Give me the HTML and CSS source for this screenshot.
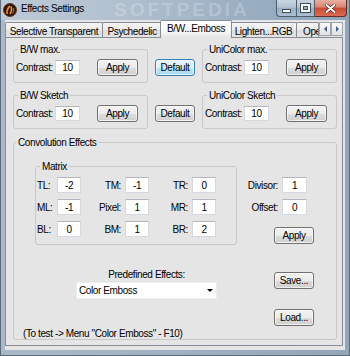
FILE: index.html
```html
<!DOCTYPE html>
<html>
<head>
<meta charset="utf-8">
<title>Effects Settings</title>
<link rel="stylesheet" href="styles.css">
</head>
<body>
<div class="window">
  <div class="titlebar">
    <svg class="app-icon" width="14" height="14" viewBox="0 0 14 14">
      <circle cx="7" cy="7" r="6.5" fill="#2a140a" stroke="#6b3a18" stroke-width="1"/>
      <path d="M4 11 Q3.5 6 7 3" fill="none" stroke="#e8842a" stroke-width="1.8"/>
      <path d="M7 11 Q9.5 7 8 3.5" fill="none" stroke="#f0a040" stroke-width="1.5"/>
      <path d="M9.5 10.5 Q11.5 8 10.5 5" fill="none" stroke="#c85a18" stroke-width="1.2"/>
    </svg>
    <span class="title">Effects Settings</span>
    <span class="wm-title">SOFTPEDIA</span>
    <div class="caption">
      <div class="cbtn cmin"><span class="g-min"></span></div>
      <div class="cbtn cmax"><span class="g-max"></span></div>
      <div class="cbtn cclose">
        <svg width="11" height="9" viewBox="0 0 11 9">
          <path d="M1.5 1 L9.5 8 M9.5 1 L1.5 8" stroke="#5a1c12" stroke-width="3.4" stroke-linecap="round"/>
          <path d="M1.5 1 L9.5 8 M9.5 1 L1.5 8" stroke="#ffffff" stroke-width="2" stroke-linecap="round"/>
        </svg>
      </div>
    </div>
  </div>
  <div class="frame">
    <div class="client">
      <div class="tabstrip">
        <div class="tab t1">Selective Transparent</div>
        <div class="tab t2">Psychedelic</div>
        <div class="tab t3 sel">B/W...Emboss</div>
        <div class="tab t4">Lighten...RGB</div>
        <div class="tab t5">Ope</div>
        <div class="arr"><span class="tri-l"></span></div>
        <div class="arr"><span class="tri-r"></span></div>
      </div>
      <div class="panel">
        <div class="row">
          <fieldset class="group g-small">
            <legend>B/W max.</legend>
            <div class="crow"><span class="lbl">Contrast:</span><input class="tb" value="10" readonly><button class="btn">Apply</button></div>
          </fieldset>
          <button class="btn btn-def focus">Default</button>
          <fieldset class="group g-small">
            <legend>UniColor max.</legend>
            <div class="crow"><span class="lbl">Contrast:</span><input class="tb" value="10" readonly><button class="btn">Apply</button></div>
          </fieldset>
        </div>

        <div class="row row2">
          <fieldset class="group g-small">
            <legend>B/W Sketch</legend>
            <div class="crow"><span class="lbl">Contrast:</span><input class="tb" value="10" readonly><button class="btn">Apply</button></div>
          </fieldset>
          <button class="btn btn-def">Default</button>
          <fieldset class="group g-small">
            <legend>UniColor Sketch</legend>
            <div class="crow"><span class="lbl">Contrast:</span><input class="tb" value="10" readonly><button class="btn">Apply</button></div>
          </fieldset>
        </div>

        <fieldset class="group conv">
          <legend>Convolution Effects</legend>
          <div class="conv-top">
            <fieldset class="group matrix">
              <legend>Matrix</legend>
              <div class="mgrid">
                <span>TL:</span><input class="tb" value="-2" readonly>
                <span class="r">TM:</span><input class="tb" value="-1" readonly>
                <span class="r">TR:</span><input class="tb" value="0" readonly>
                <span>ML:</span><input class="tb" value="-1" readonly>
                <span class="r">Pixel:</span><input class="tb" value="1" readonly>
                <span class="r">MR:</span><input class="tb" value="1" readonly>
                <span>BL:</span><input class="tb" value="0" readonly>
                <span class="r">BM:</span><input class="tb" value="1" readonly>
                <span class="r">BR:</span><input class="tb" value="2" readonly>
              </div>
            </fieldset>
            <div class="side">
              <div class="sgrid">
                <span class="r">Divisor:</span><input class="tb" value="1" readonly>
                <span class="r">Offset:</span><input class="tb" value="0" readonly>
              </div>
              <button class="btn">Apply</button>
            </div>
          </div>
          <div class="conv-bottom">
            <div class="pre">
              <span class="pre-label">Predefined Effects:</span>
              <div class="select"><span>Color Emboss</span><span class="caret"></span></div>
            </div>
            <div class="files">
              <button class="btn save">Save...</button>
              <button class="btn load">Load...</button>
            </div>
          </div>
          <div class="note">(To test -&gt; Menu "Color Emboss" - F10)</div>
        </fieldset>
      </div>
    </div>
  </div>
</div>
</body>
</html>
```
FILE: styles.css
```css
* { box-sizing: border-box; }
html, body { margin: 0; padding: 0; }
body {
  width: 350px;
  height: 356px;
  overflow: hidden;
  background: #9aadc0;
  font-family: "Liberation Sans", Arial, sans-serif;
  font-size: 10px;
  letter-spacing: -0.4px;
  color: #000;
}
.window {
  width: 350px;
  height: 356px;
  display: flex;
  flex-direction: column;
  background: linear-gradient(to right, #a9b9ca, #9fb1c4 50%, #91a6bb);
}

/* title bar */
.titlebar {
  position: relative;
  height: 20px;
  flex: none;
  display: flex;
  align-items: flex-start;
  background: linear-gradient(to right, #bdcad7 0%, #b1c0cf 35%, #9aaec2 70%, #8fa4ba 100%);
  box-shadow: inset 1px 0 #5e6b78, inset -1px 0 #5e6b78;
}
.app-icon { margin: 3px 0 0 3px; flex: none; }
.title { margin: 3px 0 0 4px; line-height: 12px; white-space: nowrap; }
.wm-title {
  position: absolute;
  left: 114px;
  top: 0;
  font-size: 19px;
  line-height: 20px;
  font-weight: bold;
  letter-spacing: 3px;
  color: rgba(255, 255, 255, 0.22);
  white-space: nowrap;
}
.caption { margin-left: auto; margin-right: 3px; display: flex; position: relative; }
.cbtn {
  height: 17px;
  border: 1px solid #4e5d6c;
  border-top: 0;
  display: flex;
  align-items: center;
  justify-content: center;
  background: linear-gradient(#c9d5e1, #b4c4d4 45%, #9aaec3 50%, #abbfd2);
}
.cmin { width: 20px; border-radius: 0 0 0 4px; border-right: 0; }
.cmax { width: 19px; }
.cclose {
  width: 32px;
  border-left: 0;
  border-color: #6b2b20;
  border-radius: 0 0 4px 0;
  background: linear-gradient(#eab0a2, #d98470 45%, #c84c34 50%, #d86c52);
}
.g-min { width: 9px; height: 4px; background: #fff; border: 1px solid #3d4a57; margin-top: 6px; }
.g-max { width: 9px; height: 8px; border: 2px solid #fff; box-shadow: 0 0 0 1px #3d4a57, inset 0 0 0 1px #3d4a57; }

/* window frame */
.frame {
  flex: 1;
  display: flex;
  padding: 0 6px 6px 5px;
  box-shadow: inset 1px 0 #5e6b78, inset -1px 0 #5e6b78, inset 0 -1px #5e6b78;
}
.client {
  flex: 1;
  display: flex;
  flex-direction: column;
  background: #e5e5e5;
  padding: 0 2px 4px 0;
}

/* tabs */
.tabstrip {
  height: 17px;
  flex: none;
  display: flex;
  align-items: flex-end;
}
.tab {
  height: 15px;
  border: 1px solid #898c95;
  border-bottom: 0;
  border-radius: 2px 2px 0 0;
  background: linear-gradient(#f4f4f4, #ececec 50%, #dedede 51%, #e4e4e4);
  text-align: center;
  line-height: 10px;
  padding-top: 4px;
  white-space: nowrap;
  overflow: hidden;
}
.t1 { width: 98px; }
.t2 { width: 60px; margin-left: -1px; }
.t3 { width: 72px; margin: 0 -2px -1px -2px; }
.t4 { width: 67px; }
.t5 { width: 23px; margin-left: -1px; text-align: left; padding-left: 6px; text-overflow: clip; }
.tab.sel {
  position: relative;
  z-index: 2;
  height: 18px;
  padding-top: 3px;
  background: linear-gradient(#ffffff, #f8f8f8 60%, #e5e5e5);
}
.arr {
  width: 12px;
  height: 14px;
  margin-bottom: 1px;
  border: 1px solid #a0a5ad;
  background: linear-gradient(#fafafa, #e2e2e2);
  display: flex;
  align-items: center;
  justify-content: center;
}
.tri-l { border-right: 3px solid #42608e; border-top: 3px solid transparent; border-bottom: 3px solid transparent; }
.tri-r { border-left: 3px solid #42608e; border-top: 3px solid transparent; border-bottom: 3px solid transparent; }

/* panel */
.panel {
  position: relative;
  border: 1px solid #898c95;
  background: #e5e5e5;
  padding: 6px 4px 5px 7px;
}

.group {
  margin: 0;
  padding: 0 0 6px 2px;
  border: 1px solid #c8c8c8;
  border-radius: 3px;
  min-width: 0;
}
legend {
  padding: 0 2px;
  margin-left: 2px;
  line-height: 11px;
  font-size: 10px;
}
.row { display: flex; align-items: flex-end; }
.row2 { margin-top: 7px; }
.g-small { width: 135px; }
.crow { display: flex; align-items: center; height: 17px; margin-top: 4px; }
.lbl { width: 39px; white-space: nowrap; }

.tb {
  width: 25px;
  height: 15px;
  border: 1px solid #d6dadf;
  border-top-color: #b3b7bd;
  background: #fff;
  font: inherit;
  letter-spacing: inherit;
  text-align: center;
  padding: 0;
  margin: 0;
  color: #000;
  outline: none;
}
.btn {
  height: 17px;
  width: 41px;
  border: 1px solid #707070;
  border-radius: 3px;
  background: linear-gradient(#f3f3f3, #ebebeb 50%, #dddddd 51%, #cfcfcf);
  box-shadow: inset 0 0 0 1px rgba(255, 255, 255, 0.7);
  font: inherit;
  letter-spacing: inherit;
  color: #000;
  padding: 0;
  margin: 0;
}
.crow .btn { margin-left: 17px; }
.btn-def { width: 40px; margin: 0 7px 7px; }
.btn-def.focus {
  border-color: #3c7fb1;
  background: linear-gradient(#eaf6fd, #d9f0fc 50%, #bee6fd 51%, #a7d9f5);
}

/* convolution */
.conv { margin-top: 8px; width: 324px; padding: 0; }
.conv-top { display: flex; align-items: flex-start; }
.matrix { margin: 13px 0 0 21px; width: 202px; padding: 0 0 7px 1px; }
.matrix legend { margin-left: 3px; }
.mgrid {
  display: grid;
  grid-template-columns: 20px 24px 44px 24px 43px 24px;
  grid-auto-rows: 16px;
  row-gap: 6px;
  margin-top: 5px;
  align-items: center;
  white-space: nowrap;
}
.mgrid .tb { width: 24px; height: 16px; }
.r { text-align: right; padding-right: 4px; }
.side { margin: 29px 0 0 3px; display: flex; flex-direction: column; }
.sgrid {
  display: grid;
  grid-template-columns: 42px 25px;
  grid-auto-rows: 16px;
  row-gap: 6px;
  align-items: center;
  white-space: nowrap;
}
.sgrid .tb { height: 16px; }
.side .btn { margin: 12px 0 0 34px; width: 40px; }

.conv-bottom { display: flex; align-items: flex-start; }
.pre { margin: 24px 0 0 62px; width: 141px; display: flex; flex-direction: column; }
.pre-label { text-align: center; line-height: 11px; white-space: nowrap; }
.select {
  margin-top: 2px;
  height: 17px;
  background: #fff;
  border: 1px solid #ededed;
  display: flex;
  align-items: center;
  justify-content: space-between;
  padding-left: 2px;
}
.caret {
  width: 0;
  height: 0;
  border-left: 3px solid transparent;
  border-right: 3px solid transparent;
  border-top: 3px solid #000;
  margin-right: 3px;
}
.files { margin-left: 57px; display: flex; flex-direction: column; }
.files .btn { width: 40px; }
.save { margin-top: 27px; }
.load { margin-top: 20px; }
.note { margin-top: 2px; padding-left: 9px; line-height: 11px; white-space: nowrap; }
```
